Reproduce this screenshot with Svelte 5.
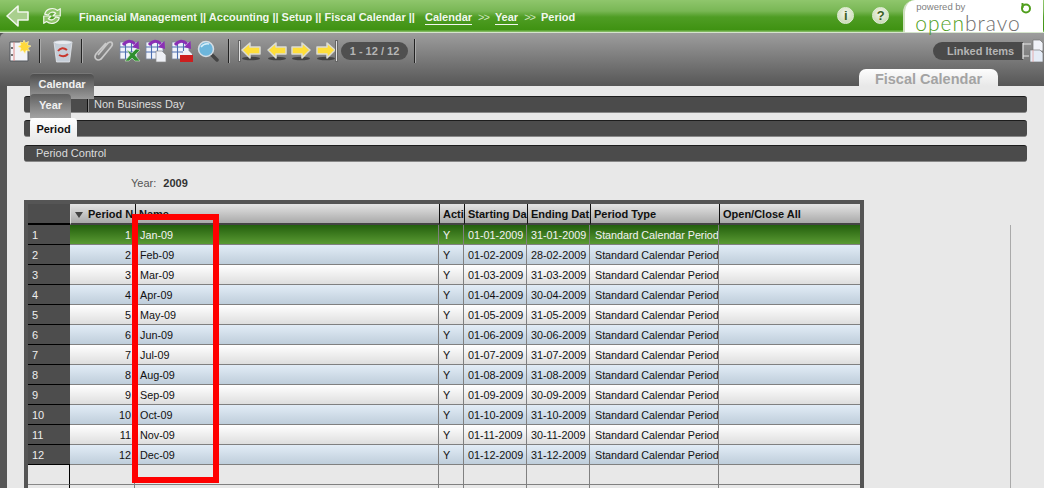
<script>
    const months = ["Jan", "Feb", "Mar", "Apr", "May", "Jun", "Jul", "Aug", "Sep", "Oct", "Nov", "Dec"];
    const lastDays = [31, 28, 31, 30, 31, 30, 31, 31, 30, 31, 30, 31];

    const pad = (n) => String(n).padStart(2, "0");

    const periods = months.map((m, i) => ({
        no: i + 1,
        name: `${m}-09`,
        start: `01-${pad(i + 1)}-2009`,
        end: `${lastDays[i]}-${pad(i + 1)}-2009`
    }));

    const columns = ["Acti", "Starting Da", "Ending Dat", "Period Type", "Open/Close All"];
</script>

{#snippet sheet()}
    <rect x="1" y="3" width="17" height="17" fill="#f0f3fa" stroke="#7d879c" stroke-width="0.8" />
    <path d="M1 8h17M1 13h17M6.500 3v17M12.500 3v17" stroke="#4d6fb0" stroke-width="1.100" />
    <path d="M4 6q6-7 12-1" fill="none" stroke="#8b2fb5" stroke-width="3" />
    <path d="M19.500 2l.5 8-7-2z" fill="#8b2fb5" />
{/snippet}

{#snippet arrow(dir)}
    <svg class="icon nav" viewBox="0 0 22 22">
        <ellipse cx="11" cy="18.500" rx="9" ry="1.800" fill="#222" opacity="0.6" />
        <path
            d={dir === "left" ? "M2 10l8-7v4h10v7H10v4z" : "M20 10l-8-7v4H2v7h10v4z"}
            fill="#ffdf3a"
            stroke="#dcdcd2"
            stroke-width="1.500"
            stroke-linejoin="round"
        />
    </svg>
{/snippet}

<div class="page">
    <header class="topbar">
        <svg class="back" viewBox="0 0 24 24">
            <path d="M1 12L12 2v6h10v8H12v6z" fill="#a9cf8e" stroke="#f1f7ec" stroke-width="1.600" stroke-linejoin="round" />
        </svg>
        <svg class="reload" viewBox="0 0 24 24">
            <path d="M4 10a8.500 8 0 0 1 14-4l3-2v8h-8l3-3a5 5 0 0 0-8 2z" fill="#8fc56a" stroke="#f1f7ec" stroke-width="1.300" stroke-linejoin="round" />
            <path d="M20 14a8.500 8 0 0 1-14 4l-3 2v-8h8l-3 3a5 5 0 0 0 8-2z" fill="#8fc56a" stroke="#f1f7ec" stroke-width="1.300" stroke-linejoin="round" />
        </svg>
        <nav class="crumbs">
            <span class="path">Financial Management || Accounting || Setup || Fiscal Calendar ||</span>
            <a href="#calendar">Calendar</a>
            <span class="sep">&gt;&gt;</span>
            <a href="#year">Year</a>
            <span class="sep">&gt;&gt;</span>
            <span>Period</span>
        </nav>
        <div class="round">i</div>
        <div class="round help">?</div>
        <div class="logo">
            <div class="powered">powered by</div>
            <div class="brand"><span class="open">open</span>bravo</div>
            <svg class="logo-mark" viewBox="0 0 12 12">
                <circle cx="6" cy="6.500" r="4" fill="none" stroke="#4f9e1c" stroke-width="2" />
                <path d="M2.500 6V1" stroke="#4f9e1c" stroke-width="2" />
            </svg>
        </div>
    </header>

    <div class="toolbar">
        <div class="tools">
            <svg class="icon" style="margin-left:9px" viewBox="0 0 22 24">
                <path d="M1 3h13l5 5v14H1z" fill="#f2f3f7" stroke="#55585f" />
                <path d="M5 3v19" stroke="#d88" />
                <circle cx="3" cy="9" r="1" fill="#444" /><circle cx="3" cy="16" r="1" fill="#444" />
                <path d="M15 1l1.500 3 3-1.500-1 3.500 3.500 1-3 2 1.500 3-3.500-.5-1 3-2-3-3 1 1-3.500-3-1.500 3-1.500-1-3 3 .5z" fill="#ffd93b" stroke="#fff5b8" stroke-width="0.600" />
            </svg>
            <i class="divider" style="margin:0 12px 0 8px"></i>
            <svg class="icon" viewBox="0 0 22 24">
                <path d="M2 3h18l-2.500 20h-13z" fill="#c6ced8" stroke="#e6e8ec" stroke-width="0.800" />
                <ellipse cx="11" cy="3.500" rx="9" ry="2" fill="#e8ebf0" stroke="#b4bcc6" stroke-width="0.500" />
                <path d="M6 12q4-5 9-1" fill="none" stroke="#c8372d" stroke-width="2" />
                <path d="M16 15q-4 4-9 1" fill="none" stroke="#c8372d" stroke-width="2" />
            </svg>
            <i class="divider" style="margin:0 10px 0 7px"></i>
            <svg class="icon" viewBox="0 0 22 24">
                <path d="M6 16L16 4q3-2 4 0t-1 4L9 20q-3 2-5 0t0-5L14 4" fill="none" stroke="#c9c9c9" stroke-width="1.700" />
            </svg>
            <svg class="icon" style="margin-left:5px" viewBox="0 0 22 24">
                {@render sheet()}
                <path d="M8 11l5 3 4-4 4 1-5 5 5 6h-5l-3-3-3 3H6l5-6z" fill="#2f8f2f" stroke="#cfe8c8" stroke-width="0.600" />
            </svg>
            <svg class="icon" style="margin-left:4px" viewBox="0 0 22 24">
                {@render sheet()}
                <path d="M11 12h6l4 4v7H11z" fill="#eef0f5" stroke="#888" stroke-width="0.700" />
            </svg>
            <svg class="icon" style="margin-left:4px" viewBox="0 0 22 24">
                {@render sheet()}
                <path d="M12 12h6l3 3v2h-9z" fill="#eef0f5" />
                <rect x="9" y="16" width="13" height="7" fill="#cc1e1e" />
            </svg>
            <svg class="icon" style="margin-left:4px" viewBox="0 0 22 24">
                <path d="M14 15l6 6" stroke="#444" stroke-width="3.500" stroke-linecap="round" />
                <circle cx="9" cy="10" r="7.500" fill="#6db6dc" stroke="#d5dde4" stroke-width="1.500" />
                <path d="M4 8q3-4 8-3" fill="none" stroke="#d6eef9" stroke-width="1.500" />
            </svg>
            <i class="divider" style="margin:0 9px"></i>
            <i class="limit" style="margin-right:-1px"></i>
            {@render arrow("left")}
            <span class="nav-gap"></span>
            {@render arrow("left")}
            <span class="nav-gap" style="width:2px"></span>
            {@render arrow("right")}
            <span class="nav-gap" style="width:3px"></span>
            {@render arrow("right")}
            <i class="limit" style="margin-left:-2px"></i>
            <div class="pager">1 - 12 / 12</div>
            <i class="divider" style="margin-left:6px"></i>
            <div class="linked">Linked Items</div>
            <svg class="linked-icon" viewBox="0 0 22 24">
                <path d="M11 1h7l3 3v8H11z" fill="#f0f2f8" stroke="#777" stroke-width="0.700" />
                <path d="M8 11h10l3 3v9H8z" fill="#e4ebf6" stroke="#777" stroke-width="0.700" />
                <path d="M11 11v12" stroke="#e5a0a0" stroke-width="0.800" />
                <path d="M1 4v16M1 5h8M1 17h6" fill="none" stroke="#e8e8e8" stroke-width="1.200" />
            </svg>
        </div>
        <div class="window-tab">Fiscal Calendar</div>
    </div>

    <main class="content">
        <div class="bars">
            <div class="bar first"><span class="pipe"></span>Non Business Day</div>
            <div class="bar second"></div>
            <div class="bar third">Period Control</div>

            <div class="tab calendar">Calendar</div>
            <div class="tab year">Year</div>
            <div class="tab period">Period</div>
        </div>

        <div class="year-line">Year: <b>2009</b></div>

        <div class="grid">
            <div class="head corner"></div>
            <div class="head no"><i class="sort"></i>Period N</div>
            <div class="head">Name</div>
            {#each columns as col}
                <div class="head">{col}</div>
            {/each}

            {#each periods as p, i}
                <div class="row-no">{p.no}</div>
                <div class="cell right" class:sel={i === 0} class:alt={i % 2 === 1}>{p.no}</div>
                <div class="cell name" class:sel={i === 0} class:alt={i % 2 === 1}>{p.name}</div>
                <div class="cell" class:sel={i === 0} class:alt={i % 2 === 1}>Y</div>
                <div class="cell" class:sel={i === 0} class:alt={i % 2 === 1}>{p.start}</div>
                <div class="cell" class:sel={i === 0} class:alt={i % 2 === 1}>{p.end}</div>
                <div class="cell type" class:sel={i === 0} class:alt={i % 2 === 1}>Standard Calendar Period</div>
                <div class="cell last" class:sel={i === 0} class:alt={i % 2 === 1}></div>
            {/each}

            {#each [0, 1] as _}
                <div class="row-no empty"></div>
                {#each [0, 1, 2, 3, 4, 5] as _c}
                    <div class="cell blank"></div>
                {/each}
                <div class="cell blank last"></div>
            {/each}
        </div>

        <div class="rule"></div>
        <div class="highlight"></div>
    </main>
</div>

<style>
    :global(body) {
        margin: 0;
        overflow: hidden;
        background: #e8e8e8;
    }

    .page {
        width: 1044px;
        height: 488px;
        overflow: hidden;
        position: relative;
        font-family: "Liberation Sans", Arial, sans-serif;
        font-size: 11px;
        background: #555;
    }

    .topbar {
        height: 32px;
        box-sizing: content-box;
        display: flex;
        align-items: flex-start;
        background: linear-gradient(#8fc66c 0, #79b755 11px, #4f9d24 17px, #3f9212 30px, #7fb95e 31px);
        border-bottom: 1px solid #d5e4cc;
    }

    .back {
        width: 24px;
        height: 24px;
        margin: 4px 0 0 6px;
        flex: none;
    }

    .reload {
        width: 22px;
        height: 22px;
        margin: 5px 0 0 11px;
        flex: none;
    }

    .crumbs {
        display: flex;
        gap: 6px;
        margin: 11px 0 0 16px;
        color: #f2f7ee;
        font-weight: bold;
        font-size: 11px;
        line-height: 13px;
        white-space: nowrap;
    }

    .crumbs .path {
        margin-right: 4px;
    }

    .crumbs a {
        color: #f2f7ee;
        text-decoration: none;
        border-bottom: 1px solid #f2f7ee;
        height: 13px;
    }

    .crumbs .sep {
        color: #cfe3bd;
        font-weight: normal;
        letter-spacing: -1px;
    }

    .round {
        width: 17px;
        height: 17px;
        box-sizing: border-box;
        margin: 7px 0 0 262px;
        border-radius: 50%;
        border: 1px solid #e4f0da;
        background: radial-gradient(circle at 50% 35%, #f4f7ec, #bfd2a8);
        color: #3d5f22;
        font-weight: bold;
        font-size: 13px;
        line-height: 15px;
        text-align: center;
        flex: none;
    }

    .round.help {
        margin-left: 18px;
    }

    .logo {
        position: relative;
        width: 140px;
        height: 32px;
        margin-left: 14px;
        flex: none;
        background: #fff;
        border-left: 2px solid #cfe0c0;
        border-radius: 12px 0 0 0;
        box-sizing: border-box;
    }

    .powered {
        font-size: 9.500px;
        line-height: 10px;
        margin: 2px 0 0 11px;
        color: #808080;
    }

    .brand {
        font-family: "Lato", sans-serif;
        font-weight: 300;
        font-size: 21px;
        line-height: 17px;
        margin: 2px 0 0 10px;
        letter-spacing: 1px;
        color: #6e6e6e;
    }

    .brand .open {
        color: #4f9e1c;
    }

    .logo-mark {
        position: absolute;
        top: 2px;
        right: 11px;
        width: 12px;
        height: 12px;
    }

    .toolbar {
        height: 53px;
        background: linear-gradient(#9d9d9d, #565656);
        border-radius: 5px 0 0 0;
        box-sizing: border-box;
        padding-top: 5px;
        display: flex;
        flex-direction: column;
    }

    .tools {
        display: flex;
        align-items: center;
        height: 26px;
    }

    .icon {
        width: 22px;
        height: 24px;
        flex: none;
    }

    .icon.nav {
        width: 22px;
        height: 22px;
    }

    .nav-gap {
        width: 4px;
        flex: none;
    }

    .divider {
        width: 1px;
        height: 24px;
        background: #222;
        box-shadow: 1px 0 0 #aaa;
        flex: none;
    }

    .limit {
        width: 1px;
        height: 20px;
        background: #e2e2e2;
        border: 1px solid #666;
        flex: none;
    }

    .pager {
        margin-left: 3px;
        width: 67px;
        height: 18px;
        border-radius: 9px;
        background: #4f4f4f;
        color: #b5b5b5;
        font-weight: bold;
        font-size: 11px;
        line-height: 18px;
        text-align: center;
        flex: none;
    }

    .linked {
        margin-left: auto;
        width: 90px;
        height: 18px;
        padding-left: 14px;
        box-sizing: border-box;
        border-radius: 9px 0 0 9px;
        background: #4a4a4a;
        color: #b5b5b5;
        font-weight: bold;
        font-size: 11px;
        line-height: 19px;
        flex: none;
    }

    .linked-icon {
        width: 22px;
        height: 24px;
        margin-left: -1px;
        flex: none;
    }

    .window-tab {
        align-self: flex-end;
        width: 139px;
        height: 17px;
        margin: 5px 46px 0 0;
        box-sizing: border-box;
        background: linear-gradient(#fdfdfd, #e8e8e8);
        border-radius: 7px 7px 0 0;
        color: #a3a3a3;
        font-weight: bold;
        font-size: 14.500px;
        line-height: 20px;
        text-align: center;
    }

    .content {
        position: relative;
        height: 403px;
        margin-left: 7px;
        background: #e8e8e8;
        padding: 10px 17px 0 17px;
        box-sizing: border-box;
    }

    .bars {
        position: relative;
        display: flex;
        flex-direction: column;
        gap: 7px;
    }

    .bar {
        height: 17px;
        background: #4b4b4b;
        border-top: 1px solid #1c1c1c;
        border-bottom: 1px solid #888;
        box-sizing: border-box;
        border-radius: 3px;
        color: #ddd;
        font-size: 11px;
        line-height: 15px;
        display: flex;
        align-items: center;
    }

    .bar.first {
        padding-left: 63px;
    }

    .bar.third {
        padding-left: 12px;
        margin-top: 1px;
    }

    .pipe {
        width: 1px;
        height: 15px;
        background: #111;
        box-shadow: 1px 0 0 #888;
        margin-right: 6px;
    }

    .tab {
        position: absolute;
        box-sizing: border-box;
        font-weight: bold;
        font-size: 11px;
        text-align: center;
        border-radius: 4px 4px 0 0;
    }

    .tab.calendar {
        left: 6px;
        top: -23px;
        width: 64px;
        height: 26px;
        padding-top: 4px;
        background: linear-gradient(#4e4e4e, #9a9a9a);
        border-top: 1px solid #777;
        color: #f0f0f0;
    }

    .tab.year {
        left: 6px;
        top: -2px;
        width: 41px;
        height: 24px;
        padding-top: 5px;
        background: linear-gradient(#606060, #a3a3a3);
        color: #f0f0f0;
    }

    .tab.period {
        left: 6px;
        top: 22px;
        width: 47px;
        height: 24px;
        padding-top: 5px;
        background: linear-gradient(#ffffff, #e8e8e8);
        color: #111;
    }

    .year-line {
        margin: 14px 0 0 107px;
        height: 24px;
        line-height: 14px;
        color: #555;
        font-size: 11px;
    }

    .year-line b {
        margin-left: 4px;
        color: #333;
    }

    .grid {
        width: 840px;
        box-sizing: border-box;
        padding: 4px 4px 0;
        background: #555;
        display: grid;
        grid-template-columns: 42px 65px 304px 25px 63px 63px 129px 141px;
        grid-auto-rows: 20px;
        grid-template-rows: 21px;
    }

    .head {
        background: linear-gradient(#e4e4e4, #a9a9a9);
        border-left: 1px solid #111;
        border-bottom: 2px solid #444;
        box-sizing: border-box;
        padding-left: 3px;
        color: #111;
        font-weight: bold;
        font-size: 11px;
        line-height: 20px;
        white-space: nowrap;
        overflow: hidden;
    }

    .head.corner {
        background: #4d4d4d;
        border: 0;
        border-bottom: 2px solid #000;
    }

    .head.no {
        border-left: 1px solid #ddd;
    }

    .sort {
        display: inline-block;
        width: 0;
        height: 0;
        border-left: 4px solid transparent;
        border-right: 4px solid transparent;
        border-top: 6px solid #444;
        margin: 0 5px 0 1px;
    }

    .row-no {
        background: #4d4d4d;
        color: #eee;
        border-bottom: 1px solid #000;
        box-sizing: border-box;
        padding-left: 4px;
        line-height: 20px;
        font-size: 11px;
    }

    .row-no.empty {
        background: #e8e8e8;
        border-right: 1px solid #000;
        border-bottom-color: #888;
    }

    .cell {
        background: linear-gradient(#ffffff, #dedede);
        border-right: 1px solid #808080;
        border-bottom: 1px solid #808080;
        box-sizing: border-box;
        padding-left: 4px;
        padding-right: 1px;
        color: #111;
        font-size: 10.800px;
        line-height: 20px;
        white-space: nowrap;
        overflow: hidden;
    }

    .cell.name {
        padding-left: 5px;
    }

    .cell.type {
        padding-left: 5px;
        padding-right: 0;
        letter-spacing: -0.050px;
    }

    .cell.last {
        border-right: 0;
    }

    .cell.alt {
        background: linear-gradient(#e2ecf6, #bfcedb);
    }

    .cell.sel {
        background: linear-gradient(#235f0d, #5a9a33);
        color: #f4f4f4;
    }

    .cell.blank {
        background: #e8e8e8;
    }

    .right {
        text-align: right;
        padding-right: 3px;
    }

    .rule {
        position: absolute;
        left: 1003px;
        top: 139px;
        width: 1px;
        height: 270px;
        background: #aaa;
    }

    .highlight {
        position: absolute;
        left: 125px;
        top: 128px;
        width: 87px;
        height: 269px;
        box-sizing: border-box;
        border: 6px solid #f00;
    }
</style>
